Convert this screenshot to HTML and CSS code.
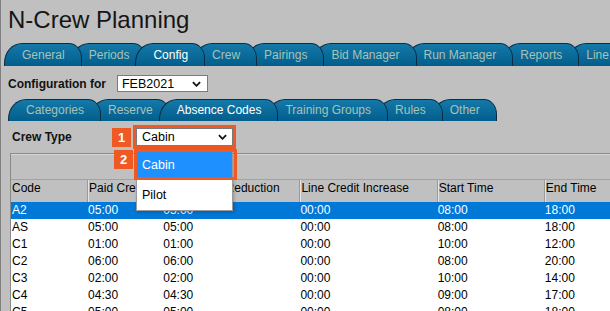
FILE: index.html
```html
<!DOCTYPE html>
<html lang="en">
<head>
    <meta charset="UTF-8">
    <meta name="viewport" content="width=device-width, initial-scale=1.0">
    <title>N-Crew Planning</title>
    <link rel="stylesheet" href="styles.css">
</head>
<body>
    <div class="page">
        <h1 class="title">N-Crew Planning</h1>

        <ul class="tabs main-tabs">
            <li class="tab">General</li>
            <li class="tab">Periods</li>
            <li class="tab active">Config</li>
            <li class="tab">Crew</li>
            <li class="tab">Pairings</li>
            <li class="tab">Bid Manager</li>
            <li class="tab">Run Manager</li>
            <li class="tab">Reports</li>
            <li class="tab">Line Manager</li>
        </ul>

        <div class="config-row">
            <span class="field-label">Configuration for</span>
            <div class="select period-select">
                <span>FEB2021</span>
                <svg class="chevron" viewBox="0 0 10 6" width="9" height="6"><polyline points="1,1 5,5 9,1" fill="none" stroke="#111" stroke-width="2"/></svg>
            </div>
        </div>

        <ul class="tabs sub-tabs">
            <li class="tab">Categories</li>
            <li class="tab">Reserve</li>
            <li class="tab active">Absence Codes</li>
            <li class="tab">Training Groups</li>
            <li class="tab">Rules</li>
            <li class="tab">Other</li>
        </ul>

        <div class="crew-row">
            <span class="field-label crew-label">Crew Type</span>
            <span class="badge">1</span>
            <div class="select crew-select">
                <span>Cabin</span>
                <svg class="chevron" viewBox="0 0 10 6" width="9" height="6"><polyline points="1,1 5,5 9,1" fill="none" stroke="#111" stroke-width="2"/></svg>
            </div>
        </div>

        <div class="grid">
            <div class="grid-toolbar"></div>
            <table class="codes">
                <colgroup>
                    <col class="c-code">
                    <col class="c-paid">
                    <col class="c-wide">
                    <col class="c-wide">
                    <col class="c-time">
                    <col class="c-time">
                </colgroup>
                <thead>
                    <tr>
                        <th>Code</th>
                        <th>Paid Credit</th>
                        <th>Line Credit Reduction</th>
                        <th>Line Credit Increase</th>
                        <th>Start Time</th>
                        <th>End Time</th>
                    </tr>
                </thead>
                <tbody>
                    <tr class="selected"><td>A2</td><td>05:00</td><td>05:00</td><td>00:00</td><td>08:00</td><td>18:00</td></tr>
                    <tr><td>AS</td><td>05:00</td><td>05:00</td><td>00:00</td><td>08:00</td><td>18:00</td></tr>
                    <tr><td>C1</td><td>01:00</td><td>01:00</td><td>00:00</td><td>10:00</td><td>12:00</td></tr>
                    <tr><td>C2</td><td>06:00</td><td>06:00</td><td>00:00</td><td>08:00</td><td>20:00</td></tr>
                    <tr><td>C3</td><td>02:00</td><td>02:00</td><td>00:00</td><td>10:00</td><td>14:00</td></tr>
                    <tr><td>C4</td><td>04:30</td><td>04:30</td><td>00:00</td><td>09:00</td><td>17:00</td></tr>
                    <tr><td>C5</td><td>05:00</td><td>05:00</td><td>00:00</td><td>08:00</td><td>18:00</td></tr>
                </tbody>
            </table>
        </div>

        <!-- open crew type list with the callouts -->
        <ul class="dropdown">
            <li class="option current">Cabin</li>
            <li class="option">Pilot</li>
        </ul>
        <div class="callout-box"></div>
        <span class="badge badge-2">2</span>
    </div>
</body>
</html>
```

FILE: styles.css
```css
body {
    margin: 0;
    width: 610px;
    height: 311px;
    overflow: hidden;
    background-color: #c0c0c0;
    font-family: 'Liberation Sans', Arial, sans-serif;
    font-size: 12px;
    color: #000;
}
.page {
    position: relative;
    height: 311px;
    border-left: 1px solid #808080;
    overflow: hidden;
}
.title {
    margin: 0;
    padding: 6px 0 0 7px;
    font-size: 24px;
    line-height: 28px;
    font-weight: normal;
    color: #151515;
}

/* tab strips */
.tabs {
    display: flex;
    margin: 0;
    list-style: none;
    white-space: nowrap;
}
.main-tabs {
    margin-top: 9px;
    padding-left: 3px;
}
.sub-tabs {
    margin-top: 7px;
    padding-left: 7px;
}
.tab {
    position: relative;
    flex: none;
    height: 22px;
    line-height: 22px;
    padding: 0 16px 0 17px;
    margin-left: -11px;
    border: 1px solid #0a2d42;
    border-bottom: none;
    border-radius: 18px 13px 0 0 / 20px 15px 0 0;
    background: linear-gradient(#1479a9, #025e8c);
    color: #a7c2b6;
}
.sub-tabs .tab {
    height: 21px;
    line-height: 21px;
}
.tab:first-child { margin-left: 0; }
.tab:nth-child(1) { z-index: 9; }
.tab:nth-child(2) { z-index: 8; }
.tab:nth-child(3) { z-index: 7; }
.tab:nth-child(4) { z-index: 6; }
.tab:nth-child(5) { z-index: 5; }
.tab:nth-child(6) { z-index: 4; }
.tab:nth-child(7) { z-index: 3; }
.tab:nth-child(8) { z-index: 2; }
.tab:nth-child(9) { z-index: 1; }
.tab.active {
    z-index: 20;
    color: #fff;
}

/* form rows */
.config-row, .crew-row {
    display: flex;
    align-items: center;
}
.config-row {
    margin-top: 9px;
    height: 17px;
    padding-left: 7px;
}
.crew-row {
    margin-top: 7px;
    height: 18px;
    padding-left: 11px;
}
.field-label {
    font-weight: bold;
    color: #111;
}
.crew-label {
    width: 100px;
}
.select {
    box-sizing: border-box;
    display: flex;
    align-items: center;
    justify-content: space-between;
    background: #fff;
    border: 1px solid #7a7a7a;
    font-size: 12.5px;
    color: #000;
}
.period-select {
    width: 91px;
    height: 17px;
    margin-left: 11px;
    padding: 0 6px 0 4px;
}
.crew-select {
    width: 97px;
    height: 18px;
    margin-left: 5px;
    padding: 0 5px 0 5px;
    outline: 3px solid #ef5a24;
}
.chevron {
    display: block;
}

/* callouts */
.badge {
    box-sizing: border-box;
    width: 19px;
    height: 19px;
    line-height: 19px;
    text-align: center;
    background: #ef5a24;
    color: #fff;
    font-weight: bold;
    font-size: 13px;
}
.badge-2 {
    position: absolute;
    left: 113px;
    top: 150px;
    z-index: 40;
}
.dropdown {
    position: absolute;
    left: 135px;
    top: 149px;
    z-index: 30;
    box-sizing: border-box;
    width: 97px;
    height: 62px;
    margin: 0;
    padding: 0;
    list-style: none;
    background: #fff;
    border: 1px solid #9a9a9a;
    box-shadow: 1px 1px 3px rgba(0,0,0,0.25);
    font-size: 12.5px;
}
.option {
    height: 30px;
    line-height: 30px;
    padding-left: 5px;
}
.option.current {
    background: #1e90ff;
    color: #fff;
}
.callout-box {
    position: absolute;
    left: 133px;
    top: 149px;
    z-index: 35;
    box-sizing: border-box;
    width: 103px;
    height: 31px;
    border: 3px solid #ef5a24;
}

/* grid */
.grid {
    margin: 7px 0 0 9px;
    border-top: 1px solid #8a8a8a;
    border-left: 1px solid #8a8a8a;
}
.grid-toolbar {
    height: 25px;
    border-bottom: 1px solid #a2a2a2;
    box-shadow: inset 0 1px #d6d6d6;
}
.codes {
    width: 640px;
    table-layout: fixed;
    border-collapse: separate;
    border-spacing: 0;
}
.c-code { width: 76px; }
.c-paid { width: 75px; }
.c-wide { width: 137px; }
.c-time { width: 107px; }
.codes th {
    height: 22px;
    padding: 1px 0 0 2px;
    box-sizing: border-box;
    vertical-align: top;
    text-align: left;
    font-weight: normal;
    line-height: 14px;
    white-space: nowrap;
    overflow: hidden;
    box-shadow: inset 1px 0 #9a9a9a, inset 2px 0 #e4e4e4;
}
.codes th:first-child {
    padding-left: 1px;
    box-shadow: none;
}
.codes td {
    height: 17px;
    padding: 0 0 0 1px;
    line-height: 17px;
    background: #fff;
    white-space: nowrap;
}
.codes tr.selected td {
    background: #0078d7;
    color: #fff;
}
```
